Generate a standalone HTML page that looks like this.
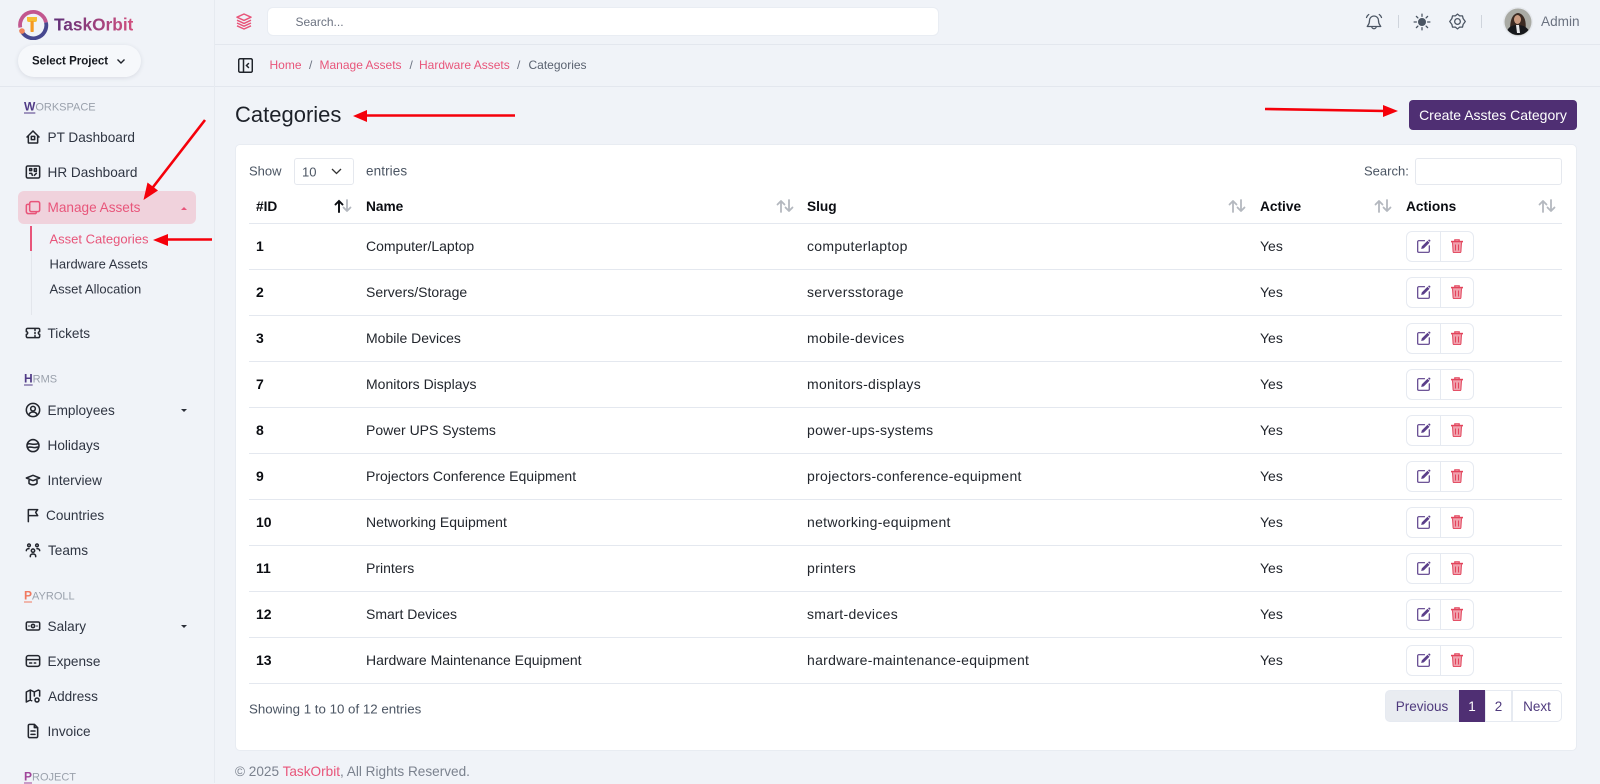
<!DOCTYPE html>
<html><head><meta charset="utf-8"><title>Categories</title>
<style>
*{box-sizing:border-box}
html,body{margin:0;padding:0}
body{width:1600px;height:783px;overflow:hidden;position:relative;background:#f0f3f8;font-family:"Liberation Sans",sans-serif;font-size:14px;color:#20242b}
.t{position:absolute;white-space:nowrap;transform:translateY(-50%);line-height:1}
.b{position:absolute}
.m{font-size:13.6px;color:#2f3542;left:47.5px;margin-top:.5px}
.s{font-size:13px;color:#2f3542;left:49.5px}
.l{font-size:11px;color:#9aa1ac;left:24px}
.l u{font-weight:700;text-underline-offset:2px;font-size:12px}
.bc{font-size:12px;color:#e8557a}
.h{font-size:13.7px;font-weight:700;color:#0b0d12;margin-top:1px}
.c{font-size:14px;color:#22262d}
.id{font-weight:700;color:#0b0d12;left:256px}.n{left:366px}.g{left:807px;letter-spacing:.3px}.a{left:1260px}
.line{position:absolute;left:249px;width:1313px;height:1px;background:#e4e8ef}
.ab{position:absolute;left:1406px;width:68px;height:31px;border:1px solid #e6eaf1;border-radius:6px;background:#fff}
.ab:before{content:"";position:absolute;left:33px;top:0;bottom:0;width:1px;background:#e6eaf1}
.ab svg{position:absolute;top:7px;width:14px;height:14px}
.ab svg.e{left:9.5px;color:#5b3f8a}
.ab svg.d{left:43px;color:#e2445c}
.ic{position:absolute;width:16px;height:16px;fill:none;stroke:#23262e;stroke-width:2.3;stroke-linecap:round;stroke-linejoin:round;left:25px}
.so{position:absolute;width:18px;height:14px;fill:none;stroke:#b4b8bf;stroke-width:1.8;stroke-linecap:round;stroke-linejoin:round;top:199px}
.pg{position:absolute;top:690px;height:32px;font-size:13.5px;color:#4f3a7d;text-align:center;line-height:32px;border:1px solid #e6eaf1;background:#fff}
</style></head><body>
<svg width="0" height="0" style="position:absolute"><defs>
<symbol id="ed" viewBox="0 0 14 14"><path d="M7.500 1.700H1.700a1 1 0 0 0-1 1v9.600a1 1 0 0 0 1 1h9.600a1 1 0 0 0 1-1V6.800" fill="none" stroke="currentColor" stroke-width="1.200" stroke-linecap="round"/><path d="M4.200 10 4.800 7.400 10.500 1.700 12.500 3.700 6.800 9.400z" fill="currentColor"/><path d="M11 1.200 12.200.4l1.400 1.400-.9 1.100z" fill="currentColor"/></symbol>
<symbol id="tr" viewBox="0 0 14 14"><path d="M2.500 3.500h9l-.6 9.200a1 1 0 0 1-1 .9H4.100a1 1 0 0 1-1-.9z" fill="currentColor" opacity=".5"/><path d="M1 2.600h12" stroke="currentColor" stroke-width="1.600" fill="none"/><path d="M4.800 2.200V.9h4.400v1.300" stroke="currentColor" stroke-width="1.200" fill="none"/><path d="M2.500 3.500l.6 9.200a1 1 0 0 0 1 .9h5.800a1 1 0 0 0 1-.9l.6-9.200M5.500 5.500v6M8.500 5.500v6" stroke="currentColor" stroke-width="1" fill="none"/></symbol>
<symbol id="sr" viewBox="0 0 18 14"><path d="M5 13V2M1.500 5.500 5 2l3.500 3.500M13 1v11M9.500 8.500 13 12l3.500-3.500"/></symbol>
</defs></svg>

<!-- structure lines -->
<div class="b" style="left:214px;top:0;width:1px;height:783px;background:#e6eaf0"></div>
<div class="b" style="left:215px;top:44px;width:1385px;height:1px;background:#e3e7ee"></div>
<div class="b" style="left:215px;top:86px;width:1385px;height:1px;background:#e3e7ee"></div>
<div class="b" style="left:0;top:86px;width:214px;height:1px;background:#e3e7ee"></div>

<!-- logo -->
<svg class="b" style="left:17px;top:8px" width="32" height="32" viewBox="0 0 32 32" fill="none">
<path d="M3.300 19.500A13 13 0 0 1 29 14.500" stroke="#c2578f" stroke-width="3.800"/>
<path d="M29 14.500A13 13 0 0 1 4 21.500" stroke="#47488f" stroke-width="3.800"/>
<path d="M10 9h10v3a2 2 0 0 1-2 2h-6a2 2 0 0 1-2-2z" fill="#f7bd33"/>
<rect x="13.500" y="13" width="3.200" height="11" rx=".8" fill="#f59a23"/>
<circle cx="5" cy="23" r="2.800" fill="#f0845a"/>
</svg>
<div class="t" style="left:54px;top:24.500px;font-size:17.300px;font-weight:700;background:linear-gradient(90deg,#5f2f78,#d1507f);-webkit-background-clip:text;background-clip:text;color:transparent">TaskOrbit</div>
<div class="b" style="left:18px;top:45px;width:123px;height:32px;border-radius:16px;background:#f6f8fb;box-shadow:0 1px 5px rgba(40,50,70,.12)"></div>
<div class="t" style="left:32px;top:62px;font-size:11.500px;font-weight:700;color:#15181e">Select Project</div>
<svg class="b" style="left:116px;top:58px" width="10" height="7" viewBox="0 0 10 7" fill="none" stroke="#20242b" stroke-width="1.400"><path d="M1.500 1.500 5 5l3.500-3.500"/></svg>

<!-- sidebar -->
<div class="t l" style="top:107px"><u style="color:#4f3a86">W</u>ORKSPACE</div>
<svg class="ic" style="top:129px" viewBox="0 0 24 24"><path d="M3 12 12 3l9 9M5 10v10a1 1 0 0 0 1 1h12a1 1 0 0 0 1-1V10"/><rect x="9.500" y="11" width="5" height="5"/></svg>
<div class="t m" style="top:137px">PT Dashboard</div>
<svg class="ic" style="top:164px" viewBox="0 0 24 24"><rect x="2" y="3" width="20" height="18" rx="2"/><path d="M7 7h3v3H7zM14 7h3v4h-3zM7 14h3l1 3M14 17l3-3"/></svg>
<div class="t m" style="top:172px">HR Dashboard</div>
<div class="b" style="left:18px;top:191px;width:178px;height:33px;border-radius:6px;background:#f0d2dc"></div>
<svg class="ic" style="top:199px;stroke:#e8557a" viewBox="0 0 24 24"><rect x="7" y="4" width="15" height="15" rx="2.500"/><path d="M7 8H4a2 2 0 0 0-2 2v9a3 3 0 0 0 3 3h10a2 2 0 0 0 2-2v-1"/></svg>
<div class="t m" style="top:207px;color:#e8557a">Manage Assets</div>
<div class="b" style="left:181px;top:207px;border:3px solid transparent;border-top:0;border-bottom:3px solid #e8557a"></div>
<div class="b" style="left:31px;top:226px;width:1px;height:89px;background:#e3e6ec"></div>
<div class="b" style="left:30px;top:226px;width:2px;height:25px;background:#e8557a"></div>
<div class="t s" style="top:239px;color:#e8557a">Asset Categories</div>
<div class="t s" style="top:264px">Hardware Assets</div>
<div class="t s" style="top:289px">Asset Allocation</div>
<svg class="ic" style="top:325px" viewBox="0 0 24 24"><path d="M4 5h16a2 2 0 0 1 2 2v3a2 2 0 0 0 0 4v3a2 2 0 0 1-2 2H4a2 2 0 0 1-2-2v-3a2 2 0 0 0 0-4V7a2 2 0 0 1 2-2zM15 6v2M15 11v2M15 16v2"/></svg>
<div class="t m" style="top:333px">Tickets</div>

<div class="t l" style="top:379px"><u style="color:#4f3a86">H</u>RMS</div>
<svg class="ic" style="top:402px" viewBox="0 0 24 24"><circle cx="12" cy="12" r="10"/><circle cx="12" cy="10" r="3.500"/><path d="M6 19c1-3 3-4 6-4s5 1 6 4"/></svg>
<div class="t m" style="top:410px">Employees</div>
<div class="b" style="left:181px;top:409px;border:3px solid transparent;border-bottom:0;border-top:3px solid #2b2f38"></div>
<svg class="ic" style="top:437px" viewBox="0 0 24 24"><circle cx="12" cy="13" r="9"/><path d="M3.500 11c4-3 7 2 16-1M4 16c5-3 8 2 15-1M10 4h4"/></svg>
<div class="t m" style="top:445px">Holidays</div>
<svg class="ic" style="top:472px" viewBox="0 0 24 24"><path d="M22 9 12 5 2 9l10 4zM6 11v6c3 3 9 3 12 0v-6"/></svg>
<div class="t m" style="top:480px">Interview</div>
<svg class="ic" style="top:507px" viewBox="0 0 24 24"><path d="M5 22V4h14l-3 4 3 5H5"/></svg>
<div class="t m" style="top:515px;left:46px">Countries</div>
<svg class="ic" style="top:542px" viewBox="0 0 24 24"><circle cx="12" cy="13" r="2.500"/><circle cx="6" cy="5" r="2"/><circle cx="18" cy="5" r="2"/><path d="M8 22v-1c0-2 2-3 4-3s4 1 4 3v1M2 13c0-2 2-3 4-3M22 13c0-2-2-3-4-3"/></svg>
<div class="t m" style="top:550px;left:48px">Teams</div>

<div class="t l" style="top:596px"><u style="color:#f0785f">P</u>AYROLL</div>
<svg class="ic" style="top:618px" viewBox="0 0 24 24"><rect x="2" y="6" width="20" height="12" rx="2"/><circle cx="12" cy="12" r="2.500"/><path d="M6 12h.01M18 12h.01"/></svg>
<div class="t m" style="top:626px">Salary</div>
<div class="b" style="left:181px;top:625px;border:3px solid transparent;border-bottom:0;border-top:3px solid #2b2f38"></div>
<svg class="ic" style="top:653px" viewBox="0 0 24 24"><rect x="2" y="4" width="20" height="16" rx="3"/><path d="M2 10h20M7 15h3M14 15h2"/></svg>
<div class="t m" style="top:661px">Expense</div>
<svg class="ic" style="top:688px" viewBox="0 0 24 24"><path d="M10 19l-2-1-6 3V6l6-3 6 3 6-3 2 1v8M8 3v15M14 6v6"/><circle cx="18" cy="18" r="3"/></svg>
<div class="t m" style="top:696px;left:48px">Address</div>
<svg class="ic" style="top:723px" viewBox="0 0 24 24"><path d="M14 2H7a2 2 0 0 0-2 2v16a2 2 0 0 0 2 2h10a2 2 0 0 0 2-2V7zM14 2v5h5M9 12h6M9 17h6"/></svg>
<div class="t m" style="top:731px">Invoice</div>
<div class="t l" style="top:777px"><u style="color:#a0459a">P</u>ROJECT</div>

<!-- topbar -->
<svg class="b" style="left:236px;top:13px" width="16" height="17" viewBox="0 0 16 17" fill="none" stroke="#e8557a" stroke-width="1.500" stroke-linejoin="round"><path d="M8 1 15 4.200 8 7.400 1 4.200zM1 7.200 8 10.400l7-3.200M1 10 8 13.200l7-3.200M1 12.800 8 16l7-3.200"/></svg>
<div class="b" style="left:267px;top:7px;width:672px;height:29px;background:#fff;border:1px solid #e9edf3;border-radius:6px"></div>
<div class="t" style="left:295.500px;top:21.500px;font-size:12px;color:#6b7280">Search...</div>
<svg class="b" style="left:1365px;top:13px" width="18" height="18" viewBox="0 0 24 24" fill="none" stroke="#4b5563" stroke-width="1.700" stroke-linecap="round" stroke-linejoin="round"><path d="M12 4a6 6 0 0 0-6 6c0 5-2 6-3 8h18c-1-2-3-3-3-8a6 6 0 0 0-6-6zM9 18a3 3 0 0 0 6 0M2 6c.5-2 1.500-3 3-4M22 6c-.5-2-1.500-3-3-4"/></svg>
<div class="b" style="left:1398px;top:15px;width:1px;height:13px;background:#cfd4dc"></div>
<svg class="b" style="left:1413px;top:13px" width="18" height="18" viewBox="0 0 24 24" fill="#4b5563" stroke="#4b5563" stroke-width="1.700" stroke-linecap="round"><circle cx="12" cy="12" r="4.500"/><path d="M12 1.500v3M12 19.500v3M1.500 12h3M19.500 12h3M4.500 4.500l2 2M17.500 17.500l2 2M4.500 19.500l2-2M17.500 6.500l2-2"/></svg>
<svg class="b" style="left:1449px;top:13px" width="17" height="17" viewBox="0 0 24 24" fill="none" stroke="#4b5563" stroke-width="1.800" stroke-linejoin="round"><path d="M12 1.500l3 2.500h4l1 4 3 4-3 4-1 4h-4l-3 2.500-3-2.500H5l-1-4-3-4 3-4 1-4h4z"/><circle cx="12" cy="12" r="4"/></svg>
<div class="b" style="left:1481px;top:15px;width:1px;height:13px;background:#cfd4dc"></div>
<svg class="b" style="left:1503px;top:7px" width="30" height="30" viewBox="0 0 30 30"><circle cx="15" cy="15" r="15" fill="#e6e9ee"/><circle cx="15" cy="15" r="13.500" fill="#a9aaa4"/><path d="M7 24c0-8 1-17 8-18 7 1 9 10 7 19l-3 2H10z" fill="#3b2a22"/><ellipse cx="14.500" cy="12.500" rx="3.500" ry="4.500" fill="#c99a80"/><path d="M4.500 23c2-4 6-5 10-5s8 1 11 5a13.500 13.500 0 0 1-21 0z" fill="#17181c"/><path d="M13 18h3l1 8h-3z" fill="#e8e8ea"/></svg>
<div class="t" style="left:1541px;top:21.500px;font-size:13.600px;color:#6b7280">Admin</div>

<!-- breadcrumb -->
<svg class="b" style="left:238px;top:58px" width="15" height="15" viewBox="0 0 15 15" fill="none" stroke="#20242b" stroke-width="1.500"><rect x=".7" y=".7" width="13.600" height="13.600" rx="1.500"/><path d="M5.500 1v13"/><path d="M10.500 5.500 8.500 7.500l2 2" stroke-linecap="round"/></svg>
<div class="t bc" style="left:269.500px;top:65px">Home</div>
<div class="t bc" style="left:309px;top:65px;color:#6b7280">/</div>
<div class="t bc" style="left:319.500px;top:65px">Manage Assets</div>
<div class="t bc" style="left:409.500px;top:65px;color:#6b7280">/</div>
<div class="t bc" style="left:419px;top:65px">Hardware Assets</div>
<div class="t bc" style="left:517px;top:65px;color:#6b7280">/</div>
<div class="t bc" style="left:528.500px;top:65px;color:#5a6270">Categories</div>

<!-- title -->
<div class="t" style="left:235px;top:115px;font-size:22px;color:#1d2129">Categories</div>
<div class="b" style="left:1409px;top:100px;width:168px;height:30px;background:#4f2f73;border-radius:4px;color:#fff;font-size:14px;line-height:30px;text-align:center">Create Asstes Category</div>

<!-- card -->
<div class="b" style="left:235px;top:144px;width:1342px;height:607px;background:#fff;border:1px solid #e8ecf2;border-radius:5px"></div>
<div class="t" style="left:249px;top:171px;font-size:13px;color:#4b5563">Show</div>
<div class="b" style="left:294px;top:158px;width:60px;height:27px;border:1px solid #e5e8ee;border-radius:3px;background:#fff"></div>
<div class="t" style="left:302px;top:171.500px;font-size:13px;color:#4b5563">10</div>
<svg class="b" style="left:331px;top:168px" width="11" height="7" viewBox="0 0 11 7" fill="none" stroke="#333" stroke-width="1.300"><path d="M1 1l4.500 4.500L10 1"/></svg>
<div class="t" style="left:366px;top:171px;font-size:13.500px;letter-spacing:.1px;color:#4b5563">entries</div>
<div class="t" style="left:1364px;top:171px;font-size:13px;color:#4b5563">Search:</div>
<div class="b" style="left:1415px;top:158px;width:147px;height:27px;border:1px solid #e5e8ee;border-radius:3px"></div>

<div class="t h" style="left:256px;top:206px">#ID</div>
<svg class="so" style="left:334px" viewBox="0 0 18 14"><use href="#sr"/></svg>
<svg class="b" style="left:334px;top:199px" width="10" height="14" viewBox="0 0 10 14" fill="none" stroke="#0b0d12" stroke-width="1.900" stroke-linecap="round"><path d="M5 13V2M1.500 5.500 5 2l3.500 3.500"/></svg>
<div class="t h" style="left:366px;top:206px">Name</div>
<svg class="so" style="left:776px" viewBox="0 0 18 14"><use href="#sr"/></svg>
<div class="t h" style="left:807px;top:206px">Slug</div>
<svg class="so" style="left:1228px" viewBox="0 0 18 14"><use href="#sr"/></svg>
<div class="t h" style="left:1260px;top:206px">Active</div>
<svg class="so" style="left:1374px" viewBox="0 0 18 14"><use href="#sr"/></svg>
<div class="t h" style="left:1406px;top:206px">Actions</div>
<svg class="so" style="left:1538px" viewBox="0 0 18 14"><use href="#sr"/></svg>

<div class="line" style="top:223px"></div>
<div class="t c id" style="top:246px">1</div><div class="t c n" style="top:246px">Computer/Laptop</div><div class="t c g" style="top:246px">computerlaptop</div><div class="t c a" style="top:246px">Yes</div>
<div class="ab" style="top:231px"><svg class="e"><use href="#ed"/></svg><svg class="d"><use href="#tr"/></svg></div>
<div class="line" style="top:269px"></div>
<div class="t c id" style="top:292px">2</div><div class="t c n" style="top:292px">Servers/Storage</div><div class="t c g" style="top:292px">serversstorage</div><div class="t c a" style="top:292px">Yes</div>
<div class="ab" style="top:277px"><svg class="e"><use href="#ed"/></svg><svg class="d"><use href="#tr"/></svg></div>
<div class="line" style="top:315px"></div>
<div class="t c id" style="top:338px">3</div><div class="t c n" style="top:338px">Mobile Devices</div><div class="t c g" style="top:338px">mobile-devices</div><div class="t c a" style="top:338px">Yes</div>
<div class="ab" style="top:323px"><svg class="e"><use href="#ed"/></svg><svg class="d"><use href="#tr"/></svg></div>
<div class="line" style="top:361px"></div>
<div class="t c id" style="top:384px">7</div><div class="t c n" style="top:384px">Monitors Displays</div><div class="t c g" style="top:384px">monitors-displays</div><div class="t c a" style="top:384px">Yes</div>
<div class="ab" style="top:369px"><svg class="e"><use href="#ed"/></svg><svg class="d"><use href="#tr"/></svg></div>
<div class="line" style="top:407px"></div>
<div class="t c id" style="top:430px">8</div><div class="t c n" style="top:430px">Power UPS Systems</div><div class="t c g" style="top:430px">power-ups-systems</div><div class="t c a" style="top:430px">Yes</div>
<div class="ab" style="top:415px"><svg class="e"><use href="#ed"/></svg><svg class="d"><use href="#tr"/></svg></div>
<div class="line" style="top:453px"></div>
<div class="t c id" style="top:476px">9</div><div class="t c n" style="top:476px">Projectors Conference Equipment</div><div class="t c g" style="top:476px">projectors-conference-equipment</div><div class="t c a" style="top:476px">Yes</div>
<div class="ab" style="top:461px"><svg class="e"><use href="#ed"/></svg><svg class="d"><use href="#tr"/></svg></div>
<div class="line" style="top:499px"></div>
<div class="t c id" style="top:522px">10</div><div class="t c n" style="top:522px">Networking Equipment</div><div class="t c g" style="top:522px">networking-equipment</div><div class="t c a" style="top:522px">Yes</div>
<div class="ab" style="top:507px"><svg class="e"><use href="#ed"/></svg><svg class="d"><use href="#tr"/></svg></div>
<div class="line" style="top:545px"></div>
<div class="t c id" style="top:568px">11</div><div class="t c n" style="top:568px">Printers</div><div class="t c g" style="top:568px">printers</div><div class="t c a" style="top:568px">Yes</div>
<div class="ab" style="top:553px"><svg class="e"><use href="#ed"/></svg><svg class="d"><use href="#tr"/></svg></div>
<div class="line" style="top:591px"></div>
<div class="t c id" style="top:614px">12</div><div class="t c n" style="top:614px">Smart Devices</div><div class="t c g" style="top:614px">smart-devices</div><div class="t c a" style="top:614px">Yes</div>
<div class="ab" style="top:599px"><svg class="e"><use href="#ed"/></svg><svg class="d"><use href="#tr"/></svg></div>
<div class="line" style="top:637px"></div>
<div class="t c id" style="top:660px">13</div><div class="t c n" style="top:660px">Hardware Maintenance Equipment</div><div class="t c g" style="top:660px">hardware-maintenance-equipment</div><div class="t c a" style="top:660px">Yes</div>
<div class="ab" style="top:645px"><svg class="e"><use href="#ed"/></svg><svg class="d"><use href="#tr"/></svg></div>
<div class="line" style="top:683px"></div>

<div class="t" style="left:249px;top:709px;font-size:13.300px;color:#4b5563">Showing 1 to 10 of 12 entries</div>
<div class="pg" style="left:1385px;width:74px;background:#e9ecf1;border-radius:5px 0 0 5px">Previous</div>
<div class="pg" style="left:1459px;width:26px;background:#4f2f73;border-color:#4f2f73;color:#fff">1</div>
<div class="pg" style="left:1485px;width:27px">2</div>
<div class="pg" style="left:1512px;width:50px;border-radius:0 5px 5px 0">Next</div>

<div class="t" style="left:235px;top:771.500px;font-size:13.600px;color:#7b828e">© 2025 <span style="color:#e8557a">TaskOrbit</span>, All Rights Reserved.</div>

<!-- red annotation arrows -->
<svg class="b" style="left:0;top:0" width="1600" height="783" fill="none">
<path d="M205 120 150 191" stroke="#f5000a" stroke-width="2.600"/><path d="M143.500 200 147.500 182.500 158 190.500z" fill="#f5000a"/>
<path d="M212 239.500H165" stroke="#f5000a" stroke-width="2.600"/><path d="M153 240 168 234V246z" fill="#f5000a"/>
<path d="M515 115.500H365" stroke="#f5000a" stroke-width="2.600"/><path d="M353 116 367 110V122z" fill="#f5000a"/>
<path d="M1265 109 1385 111" stroke="#f5000a" stroke-width="2.600"/><path d="M1398 111 1383 105V117z" fill="#f5000a"/>
</svg>
</body></html>
